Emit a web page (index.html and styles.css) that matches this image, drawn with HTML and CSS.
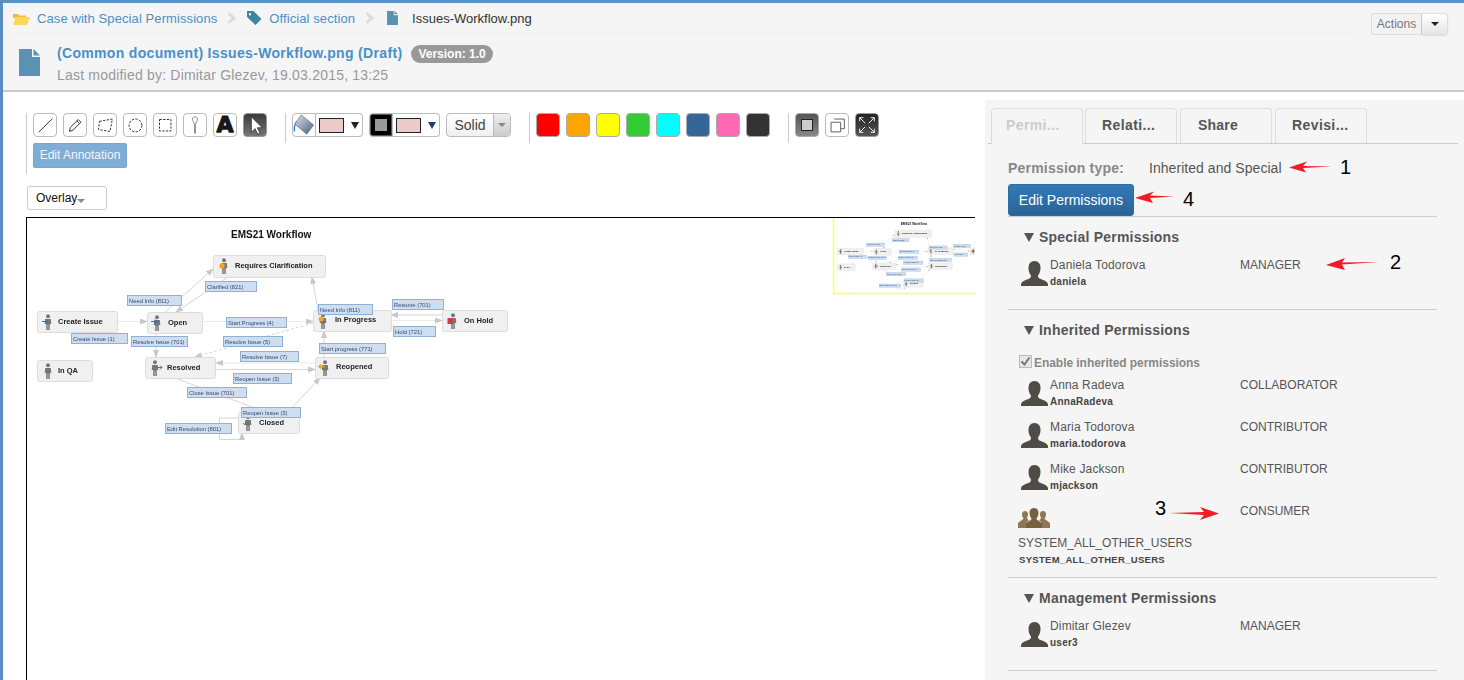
FILE: index.html
```html
<!DOCTYPE html>
<html lang="en">
<head>
<meta charset="utf-8">
<title>Issues-Workflow.png</title>
<link rel="stylesheet" href="styles.css">
</head>
<body>
<svg class="defs" width="0" height="0" aria-hidden="true">
  <defs>
    <symbol id="doc" viewBox="0 0 21 27"><path d="M0 0H13V8H21V27H0Z"/><path d="M14.500 0L21 6.500H14.500Z"/></symbol>
    <symbol id="avatar" viewBox="0 0 27 25"><path d="M13.500 0C9.500 0 7.500 3 7.500 7C7.500 10 8.500 12.500 10 14.500C10 16 9.500 17 8 17.800C4.500 19.300 1 20 0 23V25H27V23C26 20 22.500 19.300 19 17.800C17.500 17 17 16 17 14.500C18.500 12.500 19.500 10 19.500 7C19.500 3 17.500 0 13.500 0Z"/></symbol>
    <symbol id="person" viewBox="0 0 10 16"><circle cx="5" cy="2.200" r="2"/><path d="M2.200 5H7.800L8.300 10H6.800V16H5.300V11H4.700V16H3.200V10H1.700Z"/></symbol>
    <linearGradient id="bucket" x1="0" y1="0" x2="1" y2="1"><stop offset="0" stop-color="#dfe4ea"/><stop offset="1" stop-color="#47607e"/></linearGradient>
  </defs>
</svg>
<div class="app">
  <header class="page-head">
    <div class="head-main">
      <nav class="crumbs">
        <svg class="crumb-icon" width="17" height="13" viewBox="0 0 17 13"><path class="i-folder-back" d="M0 2H5L6 3.500H13V6H0Z"/><path class="i-folder" d="M0 13L2.500 5H17L14 13Z"/></svg>
        <a class="crumb-link">Case with Special Permissions</a>
        <svg class="crumb-sep" width="9" height="12" viewBox="0 0 9 12"><path d="M1 0L8.500 6L1 12L0 9.500L3.500 6L0 2.500Z"/></svg>
        <svg class="crumb-icon" width="15" height="14" viewBox="0 0 15 14"><path class="i-tag" d="M0 0H6.500L14.500 8L8.500 14L0 6Z M3 2A1.200 1.200 0 1 0 3 4.400A1.200 1.200 0 1 0 3 2Z" fill-rule="evenodd"/></svg>
        <a class="crumb-link">Official section</a>
        <svg class="crumb-sep crumb-sep-doc" width="9" height="12" viewBox="0 0 9 12"><path d="M1 0L8.500 6L1 12L0 9.500L3.500 6L0 2.500Z"/></svg>
        <svg class="crumb-doc" width="11" height="14"><use href="#doc"/></svg>
        <span class="crumb-current">Issues-Workflow.png</span>
      </nav>
      <div class="doc-title">
        <svg class="doc-icon" width="21" height="27"><use href="#doc"/></svg>
        <div class="doc-text">
          <div class="doc-line"><a class="doc-name">(Common document) Issues-Workflow.png (Draft)</a><span class="version">Version: 1.0</span></div>
          <div class="doc-meta">Last modified by: Dimitar Glezev, 19.03.2015, 13:25</div>
        </div>
      </div>
    </div>
    <div class="actions"><button class="act-label">Actions</button><button class="act-caret"><span class="caret-down"></span></button></div>
  </header>

  <main class="content">
    <section class="viewer">
      <div class="toolbar">
        <div class="tool-rows">
          <div class="tool-row">
            <span class="tool"><svg viewBox="0 0 24 24"><path class="ink" d="M5 20L20 5"/></svg></span>
            <span class="tool"><svg viewBox="0 0 24 24"><path class="ink" d="M6 19L7 14.500L15.500 6L18.500 9L10 17.500Z M14 7.500L17 10.500"/></svg></span>
            <span class="tool"><svg viewBox="0 0 24 24"><path class="ink dash" d="M6 8L20 5.500L17.500 19L5 17Z"/></svg></span>
            <span class="tool"><svg viewBox="0 0 24 24"><circle class="ink dash" cx="12.500" cy="12.500" r="7"/></svg></span>
            <span class="tool"><svg viewBox="0 0 24 24"><rect class="ink dash" x="6" y="6" width="12.500" height="12.500"/></svg></span>
            <span class="tool"><svg viewBox="0 0 24 24"><path class="ink-grey" d="M12 3C9.500 3 9 5 9.500 7L11.500 11V21H12.500V11L14.500 7C15 5 14.500 3 12 3Z"/></svg></span>
            <span class="tool tool-text">A</span>
            <span class="tool tool-dark"><svg viewBox="0 0 24 24"><path class="i-cursor" d="M8 3V20L12 16L15 22L17.500 21L14.500 15H20Z"/></svg></span>
          </div>
          <button class="edit-annot">Edit Annotation</button>
        </div>
        <span class="tool-sep"></span>
        <span class="tool tool-joined"><svg viewBox="0 0 24 24"><path class="i-bucket-line" d="M4 8L1.500 14V19"/><path class="i-bucket" d="M9 1L22.500 12L15 22L2 11Z"/></svg></span>
        <span class="swatch-select"><span class="swatch"></span><span class="tri"></span></span>
        <span class="stroke-gap"></span>
        <span class="tool tool-joined tool-stroke"><span class="stroke-inner"></span></span>
        <span class="swatch-select"><span class="swatch"></span><span class="tri tri-blue"></span></span>
        <span class="solid"><span class="solid-label">Solid</span><span class="solid-arrow"><span class="tri-small"></span></span></span>
        <span class="tool-sep sep-wide"></span>
        <span class="tool color c-red"></span>
        <span class="tool color c-orange"></span>
        <span class="tool color c-yellow"></span>
        <span class="tool color c-green"></span>
        <span class="tool color c-cyan"></span>
        <span class="tool color c-blue"></span>
        <span class="tool color c-pink"></span>
        <span class="tool color c-black"></span>
        <span class="tool-sep sep-wide"></span>
        <span class="tool tool-grey"><span class="inner-square"></span></span>
        <span class="tool"><svg viewBox="0 0 24 24"><path class="ink-thin" d="M9 5.500H20V16H16M5.500 9H16V19.500H5.500Z"/></svg></span>
        <span class="tool tool-dark tool-expand"><svg viewBox="0 0 24 24"><path class="i-expand" d="M4 4L10 10M4 4H8M4 4V8M20 4L14 10M20 4H16M20 4V8M4 20L10 14M4 20H8M4 20V16M20 20L14 14M20 20H16M20 20V16"/></svg></span>
      </div>
      <div class="overlay-select">Overlay<span class="tri-small overlay-tri"></span></div>
      <div class="canvas">
        <svg class="diagram" width="949" height="463" viewBox="26 217 949 463">
          <defs>
            <clipPath id="mini-clip"><rect x="833" y="218" width="142" height="76"/></clipPath>
            <marker id="arr" markerWidth="8" markerHeight="6" refX="7" refY="3" orient="auto" markerUnits="userSpaceOnUse"><path class="arrowhead" d="M0 0L8 3L0 6Z"/></marker>
            <g id="workflow">
              <text class="wf-title" x="231" y="238">EMS21 Workflow</text>
              <g class="edges">
                <path class="edge faint" marker-end="url(#arr)" d="M117 321.500H147"/>
                <path class="edge" marker-end="url(#arr)" d="M165 312L213 269"/>
                <path class="edge" marker-end="url(#arr)" d="M228 277L176 312"/>
                <path class="edge" marker-end="url(#arr)" d="M156 333V357"/>
                <path class="edge faint" marker-end="url(#arr)" d="M202 321.500H313"/>
                <path class="edge" marker-end="url(#arr)" d="M318 310L312 277"/>
                <path class="edge dashed" marker-end="url(#arr)" d="M313 323L195 357"/>
                <path class="edge faint" marker-end="url(#arr)" d="M315 363H216"/>
                <path class="edge" marker-end="url(#arr)" d="M215 369.500H315"/>
                <path class="edge" d="M175 378L265 412"/>
                <path class="edge" marker-end="url(#arr)" d="M288 412L320 378"/>
                <path class="edge" marker-end="url(#arr)" d="M324 357V331"/>
                <path class="edge" marker-end="url(#arr)" d="M442 315H391"/>
                <path class="edge faint" marker-end="url(#arr)" d="M391 320.500H442"/>
                <path class="edge" marker-end="url(#arr)" d="M219.500 434V418H238M219.500 434V439.500H242V433"/>
              </g>
              <g class="nodes">
                <rect class="node" x="37.500" y="311.500" width="80" height="21" rx="2"/>
                <rect class="node" x="147.500" y="312.500" width="55" height="21" rx="2"/>
                <rect class="node" x="37.500" y="360.500" width="55" height="21" rx="2"/>
                <rect class="node" x="145.500" y="357.500" width="70" height="21" rx="2"/>
                <rect class="node" x="213.500" y="255.500" width="112" height="22" rx="2"/>
                <rect class="node" x="313.500" y="310.500" width="78" height="21" rx="2"/>
                <rect class="node" x="442.500" y="310.500" width="65" height="21" rx="2"/>
                <rect class="node" x="315.500" y="357.500" width="73" height="21" rx="2"/>
                <rect class="node" x="238.500" y="412.500" width="61" height="21" rx="2"/>
                <use class="person" href="#person" x="43" y="314" width="10" height="16"/>
                <use class="person" href="#person" x="152" y="315" width="10" height="16"/>
                <use class="person" href="#person" x="43" y="363" width="10" height="16"/>
                <use class="person" href="#person" x="150" y="360" width="10" height="16"/>
                <use class="person" href="#person" x="219" y="258" width="10" height="16"/>
                <use class="person" href="#person" x="318" y="313" width="10" height="16"/>
                <use class="person" href="#person" x="448" y="313" width="10" height="16"/>
                <use class="person" href="#person" x="320" y="360" width="10" height="16"/>
                <use class="person" href="#person" x="243" y="415" width="10" height="16"/>
                <path class="mark-blue" d="M42 321.500H48M46 319.500L48 321.500L46 323.500"/>
                <path class="mark-blue" d="M151 321.500H157M155 319.500L157 321.500L155 323.500"/>
                <path class="mark-green" d="M156 367.500H162M160 365.500L162 367.500L160 369.500"/>
                <path class="mark-green" d="M243 423L245 425L248 421"/>
                <circle class="mark-orange" cx="222" cy="266" r="2.700"/>
                <circle class="mark-orange" cx="321" cy="319" r="2.500"/>
                <path class="mark-amber" d="M325 366.500H319M321 364.500L319 366.500L321 368.500"/>
                <rect class="mark-red" x="447.500" y="318" width="5" height="6"/>
                <text class="node-text" x="58" y="324">Create Issue</text>
                <text class="node-text" x="168" y="325">Open</text>
                <text class="node-text" x="58" y="373">In QA</text>
                <text class="node-text" x="167" y="370">Resolved</text>
                <text class="node-text" x="235" y="268">Requires Clarification</text>
                <text class="node-text" x="335" y="322">In Progress</text>
                <text class="node-text" x="464" y="323">On Hold</text>
                <text class="node-text" x="336" y="369">Reopened</text>
                <text class="node-text" x="259" y="425">Closed</text>
              </g>
              <g class="labels">
                <rect class="wf-label" x="127.500" y="295.500" width="54" height="10"/><text class="label-text" x="129" y="302.500">Need Info (811)</text>
                <rect class="wf-label" x="205.500" y="281.500" width="51" height="10"/><text class="label-text" x="207" y="288.500">Clarified (821)</text>
                <rect class="wf-label" x="71.500" y="333.500" width="56" height="10"/><text class="label-text" x="73" y="340.500">Create Issue (1)</text>
                <rect class="wf-label" x="131.500" y="336.500" width="56" height="10"/><text class="label-text" x="133" y="343.500">Resolve Issue (701)</text>
                <rect class="wf-label" x="226.500" y="317.500" width="60" height="10"/><text class="label-text" x="228" y="324.500">Start Progress (4)</text>
                <rect class="wf-label" x="223.500" y="336.500" width="59" height="10"/><text class="label-text" x="225" y="343.500">Resolve Issue (5)</text>
                <rect class="wf-label" x="240.500" y="351.500" width="58" height="10"/><text class="label-text" x="242" y="358.500">Resolve Issue (7)</text>
                <rect class="wf-label" x="233.500" y="373.500" width="58" height="10"/><text class="label-text" x="235" y="380.500">Reopen Issue (3)</text>
                <rect class="wf-label" x="187.500" y="387.500" width="59" height="10"/><text class="label-text" x="189" y="394.500">Close Issue (701)</text>
                <rect class="wf-label" x="241.500" y="407.500" width="59" height="10"/><text class="label-text" x="243" y="414.500">Reopen Issue (3)</text>
                <rect class="wf-label" x="165.500" y="423.500" width="66" height="10"/><text class="label-text" x="167" y="430.500">Edit Resolution (801)</text>
                <rect class="wf-label" x="318.500" y="304.500" width="54" height="10"/><text class="label-text" x="320" y="311.500">Need Info (811)</text>
                <rect class="wf-label" x="392.500" y="299.500" width="51" height="10"/><text class="label-text" x="394" y="306.500">Resume (701)</text>
                <rect class="wf-label" x="393.500" y="326.500" width="42" height="10"/><text class="label-text" x="395" y="333.500">Hold (721)</text>
                <rect class="wf-label" x="319.500" y="343.500" width="66" height="10"/><text class="label-text" x="321" y="350.500">Start progress (771)</text>
              </g>
            </g>
          </defs>
          <use href="#workflow"/>
          <g clip-path="url(#mini-clip)">
            <rect class="mini-bg" x="833" y="218" width="142" height="76"/>
            <use href="#workflow" transform="translate(824.900 148.500) scale(.328 .32)"/>
          </g>
          <path class="mini-frame" d="M833.500 218V293.500H975"/>
        </svg>
      </div>
    </section>

    <aside class="panel">
      <div class="tabs">
        <span class="tab tab-active">Permi...</span>
        <span class="tab">Relati...</span>
        <span class="tab tab-share">Share</span>
        <span class="tab tab-rev">Revisi...</span>
      </div>
      <div class="panel-body">
        <div class="perm-type"><span class="perm-key">Permission type:</span><span class="perm-value">Inherited and Special</span></div>
        <button class="edit-perms">Edit Permissions</button>
        <hr class="rule">
        <h3 class="perm-head"><span class="head-tri"></span>Special Permissions</h3>
        <div class="perm-row row-first">
          <svg class="avatar" width="27" height="25"><use href="#avatar"/></svg>
          <div class="who"><div class="who-name">Daniela Todorova</div><div class="who-id">daniela</div></div>
          <div class="role">MANAGER</div>
        </div>
        <hr class="rule">
        <h3 class="perm-head"><span class="head-tri"></span>Inherited Permissions</h3>
        <label class="inherit"><span class="check"><svg width="13" height="13" viewBox="0 0 13 13"><path class="i-check" d="M2.500 6.500L5.500 9.500L10.500 2.500"/></svg></span>Enable inherited permissions</label>
        <div class="perm-row">
          <svg class="avatar" width="27" height="25"><use href="#avatar"/></svg>
          <div class="who"><div class="who-name">Anna Radeva</div><div class="who-id">AnnaRadeva</div></div>
          <div class="role">COLLABORATOR</div>
        </div>
        <div class="perm-row">
          <svg class="avatar" width="27" height="25"><use href="#avatar"/></svg>
          <div class="who"><div class="who-name">Maria Todorova</div><div class="who-id">maria.todorova</div></div>
          <div class="role">CONTRIBUTOR</div>
        </div>
        <div class="perm-row">
          <svg class="avatar" width="27" height="25"><use href="#avatar"/></svg>
          <div class="who"><div class="who-name">Mike Jackson</div><div class="who-id">mjackson</div></div>
          <div class="role">CONTRIBUTOR</div>
        </div>
        <div class="group-row">
          <div class="group-main">
            <svg class="group-icon" width="32" height="20" viewBox="0 0 32 20"><path class="i-group-back" d="M7 3C5 3 4 4.500 4 6.500C4 8 4.700 9.500 5.500 10.500C5 12 2 13 0 15V20H9V14L11 12.500C10 11.500 9 10.500 8.800 9.800C9.500 9 10 8 10 6.500C10 4.500 9 3 7 3Z M25 3C23 3 22 4.500 22 6.500C22 8 22.500 9 23.200 9.800C23 10.500 22 11.500 21 12.500L23 14V20H32V15C30 13 27 12 26.500 10.500C27.300 9.500 28 8 28 6.500C28 4.500 27 3 25 3Z"/><path class="i-group" d="M16 0C13 0 11.500 2.300 11.500 5C11.500 7.500 12.500 9.500 13.500 10.500C13.500 12.500 10.500 13 8 15.500V20H24V15.500C21.500 13 18.500 12.500 18.500 10.500C19.500 9.500 20.500 7.500 20.500 5C20.500 2.300 19 0 16 0Z"/></svg>
            <div class="group-name">SYSTEM_ALL_OTHER_USERS</div>
            <div class="who-id group-id">SYSTEM_ALL_OTHER_USERS</div>
          </div>
          <div class="role">CONSUMER</div>
        </div>
        <hr class="rule">
        <h3 class="perm-head"><span class="head-tri"></span>Management Permissions</h3>
        <div class="perm-row row-first">
          <svg class="avatar" width="27" height="25"><use href="#avatar"/></svg>
          <div class="who"><div class="who-name">Dimitar Glezev</div><div class="who-id">user3</div></div>
          <div class="role">MANAGER</div>
        </div>
        <hr class="rule">
      </div>
    </aside>
  </main>
</div>

<svg class="callouts" width="1464" height="680" viewBox="0 0 1464 680">
  <path class="callout-arrow" d="M1332 166.500L1303 168L1306 172.500L1289 167.500L1307 161.500L1303 166Z"/>
  <path class="callout-arrow" d="M1174 196.500L1150 198L1153 203L1135 198L1154 191.500L1150 195.500Z"/>
  <path class="callout-arrow" d="M1379 262L1342 264.500L1345 270L1326 265L1345 258L1342 262.500Z"/>
  <path class="callout-arrow" d="M1169 513L1204 512L1200 507L1219 513.500L1200 520L1204 515Z"/>
  <text class="callout-num" x="1340" y="174">1</text>
  <text class="callout-num" x="1183" y="206">4</text>
  <text class="callout-num" x="1390" y="269">2</text>
  <text class="callout-num" x="1155" y="515">3</text>
</svg>
</body>
</html>
```
FILE: styles.css
```css
* { box-sizing: border-box; }
html, body { margin: 0; height: 100%; overflow: hidden; background: #fff; }
body { font-family: "Liberation Sans", Arial, sans-serif; font-size: 14px; color: #555; position: relative; }
.defs { position: absolute; }
h3, button { font-family: inherit; margin: 0; }

.app { height: 680px; border-top: 3px solid #5a92c3; border-left: 3px solid #5a8dbf; display: flex; flex-direction: column; overflow: hidden; }

/* header */
.page-head { height: 89px; flex: none; background: #f5f5f5; border-bottom: 2px solid #ccc; display: flex; justify-content: space-between; padding: 0 16px 0 10px; }
.head-main { width: 1100px; }
.crumbs { height: 31px; width: 1342px; border-bottom: 1px solid #eee; display: flex; align-items: center; }
.crumb-icon { flex: none; }
.crumb-link { color: #4a90c8; font-size: 13px; letter-spacing: .09px; margin-left: 7px; white-space: nowrap; }
.crumb-sep { fill: #ddd; margin: 0 10px 0 11px; flex: none; }
.crumb-sep-doc { margin-right: 12px; }
.crumb-doc { fill: #5b92b3; flex: none; }
.crumb-current { color: #333; font-size: 13px; margin-left: 14px; }
.i-folder { fill: #fbd75b; }
.i-folder-back { fill: #f0b93a; }
.i-tag { fill: #3a86a5; }
.doc-title { display: flex; padding: 14px 0 0 6px; }
.doc-icon { fill: #5b92b3; margin-top: 1px; flex: none; }
.doc-text { margin-left: 17px; margin-top: -5px; }
.doc-line { display: flex; align-items: center; height: 20px; }
.doc-name { font-weight: bold; font-size: 14px; color: #4a90c8; letter-spacing: .33px; white-space: nowrap; }
.version { margin: 2px 0 0 9px; background: #999; color: #fff; font-weight: bold; font-size: 12px; line-height: 18px; height: 18px; padding: 0 7px; border-radius: 9px; }
.doc-meta { font-size: 14px; letter-spacing: .2px; color: #999; margin-top: 3px; line-height: 18px; }
.actions { display: flex; margin-top: 10px; height: 22px; }
.act-label { width: 51px; height: 22px; border: 1px solid #ddd; border-right: 1px solid #ccc; background: #f2f2f2; border-radius: 4px 0 0 4px; font-size: 12px; color: #777; padding: 0; }
.act-caret { width: 26px; height: 22px; border: 1px solid #ddd; border-left: 0; background: linear-gradient(#fff, #e6e6e6); border-radius: 0 4px 4px 0; padding: 0; display: flex; align-items: center; justify-content: center; box-shadow: 0 1px 2px rgba(0,0,0,.1); }
.caret-down { width: 0; height: 0; border: 4px solid transparent; border-top-color: #222; border-bottom: 0; }

/* viewer */
.content { flex: 1; display: flex; min-height: 0; }
.viewer { width: 982px; flex: none; padding: 21px 0 0 23px; display: flex; flex-direction: column; overflow: hidden; }
.toolbar { display: flex; align-items: flex-start; height: 62px; }
.tool-rows { border-left: 1px solid #ccc; padding-left: 6px; width: 259px; height: 61px; flex: none; }
.tool-row { display: flex; gap: 6px; }
.tool { width: 24px; height: 24px; flex: none; border: 1px solid #bbb; border-radius: 4px; background: #fff; display: block; overflow: hidden; }
.tool svg { width: 22px; height: 22px; display: block; }
.ink { fill: none; stroke: #222; stroke-width: 1; }
.ink.dash { stroke-dasharray: 2.500 1.500; }
.ink-grey { fill: none; stroke: #888; stroke-width: 1; }
.ink-thin { fill: none; stroke: #555; stroke-width: 1; }
.tool-text { font-weight: bold; font-size: 22px; line-height: 22px; text-align: center; color: #1a1a1a; font-family: "DejaVu Sans", sans-serif; -webkit-text-stroke: 1px #111; text-shadow: 0 1px 1px #888; overflow: visible; }
.tool-dark { background: linear-gradient(#3a3a3a, #777); border-color: #999; }
.i-cursor { fill: #fff; stroke: #222; stroke-width: .8; }
.edit-annot { margin-top: 6px; display: block; width: 94px; height: 25px; background: #7fadd6; color: #f2f6fa; border: 1px solid #77a6d0; border-radius: 2px; font-size: 12px; padding: 0 0 1px; }
.tool-sep { width: 1px; height: 30px; background: #ccc; flex: none; margin: 0 6px 0 0; }
.sep-wide { margin-left: 18px; }
.tool-joined { border-radius: 4px 0 0 4px; }
.i-bucket { fill: url(#bucket); stroke: #556; stroke-width: .6; }
.i-bucket-line { fill: none; stroke: #2a7fd0; stroke-width: 1.500; }
.swatch-select { width: 47px; height: 24px; flex: none; display: flex; align-items: center; border: 1px solid #bbb; border-left: 0; border-radius: 0 4px 4px 0; background: #fff; padding-left: 3px; }
.swatch { width: 25px; height: 15px; background: #eccaca; border: 1px solid #222; flex: none; }
.tri { width: 0; height: 0; margin-left: 7px; border: 4px solid transparent; border-top: 7px solid #222; border-bottom: 0; }
.tri-blue { border-top-color: #1f3e66; }
.stroke-gap { width: 6px; flex: none; }
.tool-stroke { background: #555; border: 1px solid #bbb; padding: 1px; }
.stroke-inner { display: block; height: 100%; background: #999; border: 4px solid #000; }
.solid { display: flex; width: 65px; height: 24px; margin-left: 6px; flex: none; border: 1px solid #bbb; border-radius: 4px; background: linear-gradient(#fff, #f0f0f0); overflow: hidden; }
.solid-label { width: 46px; font-size: 14px; line-height: 23px; text-align: center; color: #444; }
.solid-arrow { flex: 1; background: linear-gradient(#eee, #ccc); border-left: 1px solid #bbb; display: flex; align-items: center; justify-content: center; }
.tri-small { width: 0; height: 0; border: 4px solid transparent; border-top: 4px solid #888; border-bottom: 0; display: inline-block; }
.color { margin-right: 6px; border-color: #aaa; }
.c-red { background: #f00; }
.c-orange { background: #ffa500; }
.c-yellow { background: #ff0; }
.c-green { background: #32cd32; }
.c-cyan { background: #0ff; }
.c-blue { background: #369; }
.c-pink { background: #ff69b4; }
.c-black { background: #333; margin-right: 0; }
.tool-grey { background: linear-gradient(#555, #888); border-color: #aaa; margin-right: 6px; padding: 5px; }
.inner-square { display: block; width: 100%; height: 100%; background: #ccc; border: 1px solid #222; }
.tool-grey + .tool { margin-right: 6px; }
.tool-expand { background: linear-gradient(#222, #555); }
.i-expand { fill: none; stroke: #fff; stroke-width: 1; }
.overlay-select { margin: 11px 0 0 1px; width: 80px; height: 24px; border: 1px solid #ccc; border-radius: 3px; font-size: 12px; line-height: 23px; padding-left: 8px; color: #111; background: #fff; }
.overlay-tri { vertical-align: -1px; }
.canvas { margin-top: 7px; width: 949px; height: 463px; flex: none; background: #fff; border-top: 1px solid #000; box-shadow: inset 1px 0 0 #000; position: relative; overflow: hidden; }
.diagram { display: block; margin-top: -1px; }
.diagram > use, .diagram > g { filter: blur(.3px); }
.mini-bg { fill: #fff; }
.mini-frame { fill: none; stroke: #ffff55; stroke-width: 1.500; }
.wf-title { font: bold 10px "Liberation Sans", Arial, sans-serif; fill: #111; }
.node { fill: #f0f0f0; stroke: #ddd; }
.node-text { font: bold 7.500px "Liberation Sans", Arial, sans-serif; fill: #222; }
.wf-label { fill: #cfdeee; stroke: #8fb1d6; }
.label-text { font: 5.800px "Liberation Sans", Arial, sans-serif; fill: #2c4a78; }
.edge { fill: none; stroke: #d5d5d5; stroke-width: 1; }
.edge.faint { stroke: #eaeaea; }
.edge.dashed { stroke-dasharray: 3 2; }
.arrowhead { fill: #c8c8c8; }
.person { fill: #777; }
.mark-blue, .mark-green, .mark-amber { fill: none; stroke-width: 1; }
.mark-blue { stroke: #3a6ea8; }
.mark-green { stroke: #2a9a3a; }
.mark-amber { stroke: #f0a020; stroke-width: 1.500; }
.mark-orange { fill: #f5a623; }
.mark-red { fill: #d63a3a; }

/* panel */
.panel { width: 479px; flex: none; margin-top: 8px; background: #f5f5f5; padding: 8px 0 0 3px; overflow: hidden; }
.tabs { display: flex; height: 36px; border-bottom: 1px solid #ccc; width: 470px; padding-left: 3px; gap: 2px; }
.tab { width: 92px; height: 35px; border: 1px solid #ddd; border-bottom: 0; border-radius: 4px 4px 0 0; font-weight: bold; font-size: 14px; letter-spacing: .4px; color: #555; text-align: left; padding-left: 16px; line-height: 32px; }
.tab-active { height: 36px; background: #f5f5f5; color: #ccc; padding-left: 14px; }
.tab-share { margin-left: 1px; padding-left: 17px; letter-spacing: .2px; }
.tab-rev { margin-left: 1px; }
.panel-body { padding: 0 0 0 20px; width: 449px; }
.perm-type { display: flex; height: 17px; margin-top: 16px; line-height: 17px; }
.perm-key { width: 141px; font-weight: bold; color: #888; letter-spacing: .2px; }
.perm-value { color: #555; letter-spacing: .05px; }
.edit-perms { display: block; margin-top: 7px; width: 126px; height: 32px; background: linear-gradient(#337ab7, #2a6496); color: #fff; border: 1px solid #2d6ca2; border-radius: 3px; font-size: 14px; padding: 0; }
.rule { border: 0; border-top: 1px solid #ccc; margin: 0; width: 429px; height: 0; }
.perm-head { font-size: 14px; font-weight: bold; color: #555; letter-spacing: .22px; line-height: 16px; padding-left: 16px; display: flex; align-items: center; margin-top: 12px; }
.head-tri { width: 0; height: 0; border: 5px solid transparent; border-top: 9px solid #555; border-bottom: 0; margin-right: 5px; }
.perm-row { display: grid; grid-template-columns: 27px 188px 1fr; column-gap: 2px; padding-left: 13px; height: 42px; font-size: 12px; }
.perm-row.row-first { margin-top: 13px; height: 51px; }
.avatar { fill: #4f4b46; margin-top: 3px; }
.who-name { font-size: 12px; letter-spacing: .15px; line-height: 14px; color: #555; }
.who-id { font-size: 10px; letter-spacing: .25px; font-weight: bold; color: #444; line-height: 12px; margin-top: 4px; white-space: nowrap; }
.role { font-size: 12px; line-height: 14px; color: #555; }
.inherit { display: flex; align-items: center; height: 17px; margin: 16px 0 7px 11px; font-size: 12px; letter-spacing: -.05px; font-weight: bold; color: #888; }
.check { width: 13px; height: 13px; border: 1px solid #bbb; background: #e6e6e6; margin-right: 2px; margin-top: -3px; display: block; }
.check svg { display: block; margin: -1px; }
.i-check { fill: none; stroke: #777; stroke-width: 2; }
.group-row { display: grid; grid-template-columns: 222px 1fr; padding-left: 10px; height: 73px; }
.group-icon { display: block; margin-top: 4px; }
.i-group-back { fill: #8f7657; }
.i-group { fill: #77603f; }
.group-name { font-size: 12px; line-height: 14px; margin-top: 8px; color: #555; }
.group-id { font-size: 9.500px; letter-spacing: .3px; margin-top: 4px; margin-left: 1px; }

/* review annotations laid over the screenshot */
.callouts { position: absolute; left: 0; top: 0; pointer-events: none; }
.callout-arrow { fill: #ee1c25; }
.callout-num { font: 20px "Liberation Sans", Arial, sans-serif; fill: #000; }
```
